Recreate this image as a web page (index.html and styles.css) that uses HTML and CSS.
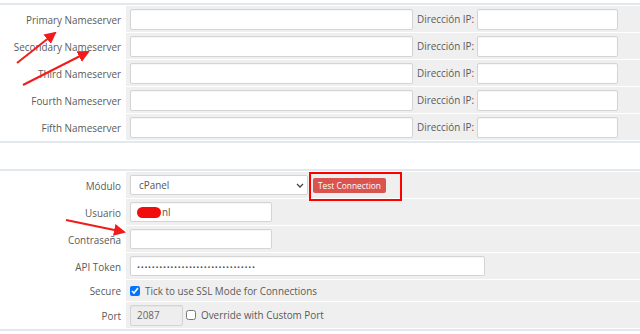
FILE: index.html
```html
<!DOCTYPE html>
<html lang="es">
<head>
    <meta charset="UTF-8">
    <meta name="viewport" content="width=device-width, initial-scale=1.0">
    <title>Servidor</title>
    <link rel="stylesheet" href="styles.css">
</head>
<body>
    <div class="panel panel-ns">
        <div class="row">
            <div class="label">Primary Nameserver</div>
            <div class="field">
                <input class="input ns" type="text">
                <span class="ip-label">Dirección IP:</span>
                <input class="input ip" type="text">
            </div>
        </div>
        <div class="row">
            <div class="label">Secondary Nameserver</div>
            <div class="field">
                <input class="input ns" type="text">
                <span class="ip-label">Dirección IP:</span>
                <input class="input ip" type="text">
            </div>
        </div>
        <div class="row">
            <div class="label">Third Nameserver</div>
            <div class="field">
                <input class="input ns" type="text">
                <span class="ip-label">Dirección IP:</span>
                <input class="input ip" type="text">
            </div>
        </div>
        <div class="row">
            <div class="label">Fourth Nameserver</div>
            <div class="field">
                <input class="input ns" type="text">
                <span class="ip-label">Dirección IP:</span>
                <input class="input ip" type="text">
            </div>
        </div>
        <div class="row">
            <div class="label">Fifth Nameserver</div>
            <div class="field">
                <input class="input ns" type="text">
                <span class="ip-label">Dirección IP:</span>
                <input class="input ip" type="text">
            </div>
        </div>
    </div>

    <div class="panel panel-module">
        <div class="row">
            <div class="label">Módulo</div>
            <div class="field">
                <div class="select">
                    <span>cPanel</span>
                    <svg class="chevron" width="8" height="5" viewBox="0 0 8 5"><path d="M1 1l3 3 3-3" fill="none" stroke="#444" stroke-width="1.3"/></svg>
                </div>
                <button class="btn-test">Test Connection</button>
            </div>
        </div>
        <div class="row">
            <div class="label">Usuario</div>
            <div class="field">
                <div class="input short"><span class="redact"></span>nl</div>
            </div>
        </div>
        <div class="row">
            <div class="label">Contraseña</div>
            <div class="field">
                <input class="input short" type="text">
            </div>
        </div>
        <div class="row">
            <div class="label">API Token</div>
            <div class="field">
                <div class="input token"><span class="dots">••••••••••••••••••••••••••••••••</span></div>
            </div>
        </div>
        <div class="row row-short">
            <div class="label">Secure</div>
            <div class="field">
                <label class="check"><input type="checkbox" checked> Tick to use SSL Mode for Connections</label>
            </div>
        </div>
        <div class="row">
            <div class="label">Port</div>
            <div class="field">
                <div class="input port">2087</div>
                <label class="check check-port"><input type="checkbox"> Override with Custom Port</label>
            </div>
        </div>
    </div>

    <!-- red annotations drawn over the screenshot -->
    <svg class="marks" width="640" height="334" viewBox="0 0 640 334">
        <defs>
            <marker id="head" markerWidth="6" markerHeight="6" refX="5" refY="3" orient="auto" markerUnits="strokeWidth">
                <path d="M0 0L6 3L0 6z" fill="#f21b1b"/>
            </marker>
        </defs>
        <line x1="17" y1="63" x2="55" y2="33" stroke="#f21b1b" stroke-width="2" marker-end="url(#head)"/>
        <line x1="23" y1="85" x2="88" y2="52" stroke="#f21b1b" stroke-width="2" marker-end="url(#head)"/>
        <line x1="66" y1="220" x2="124" y2="232" stroke="#f21b1b" stroke-width="2" marker-end="url(#head)"/>
        <rect x="310" y="173" width="91" height="27" fill="none" stroke="#ff0000" stroke-width="2"/>
    </svg>
</body>
</html>
```

FILE: styles.css
```css
body {
    margin: 0;
    font-family: "Open Sans", "DejaVu Sans", sans-serif;
    font-size: 9.9px;
    color: #5a5a5a;
    background: #fff;
    position: relative;
}
.panel {
    border-top: 2px solid #e3e8ed;
    border-bottom: 2px solid #e3e8ed;
    padding-bottom: 1px;
}
.panel-ns {
    margin-top: 3px;
}
.panel-module {
    margin-top: 26px;
}
.row {
    display: flex;
    height: 26px;
    padding-top: 1px;
}
.row-short {
    height: 21px;
}
.label {
    width: 121px;
    padding: 1px 5px 0 0;
    display: flex;
    align-items: center;
    justify-content: flex-end;
    white-space: nowrap;
}
.field {
    flex: 1;
    background: #efefef;
    display: flex;
    align-items: center;
    padding-left: 4px;
}
.input {
    box-sizing: border-box;
    height: 21px;
    border: 1px solid #d4d4d4;
    border-radius: 2px;
    background: #fff;
    font-family: inherit;
    font-size: inherit;
    color: #555;
    padding: 0 6px;
    margin: 0;
    display: flex;
    align-items: center;
    box-shadow: inset 0 1px 1px rgba(0, 0, 0, 0.04);
}
.ns {
    width: 283px;
}
.ip {
    width: 141px;
}
.ip-label {
    width: 60px;
    padding-left: 4px;
}
.select {
    box-sizing: border-box;
    width: 178px;
    height: 20px;
    border: 1px solid #d4d4d4;
    border-radius: 2px;
    background: #fff;
    display: flex;
    align-items: center;
    justify-content: space-between;
    padding: 0 3px 0 8px;
    color: #555;
}
.chevron {
    display: block;
}
.btn-test {
    margin-left: 5px;
    height: 15px;
    width: 73px;
    padding: 0;
    border: none;
    border-radius: 2px;
    background: #d9534f;
    color: #fff;
    font-family: inherit;
    font-size: 8.4px;
}
.short {
    width: 142px;
    height: 20px;
}
.redact {
    display: inline-block;
    width: 24px;
    height: 11px;
    border-radius: 6px;
    background: #f20d0d;
    margin-right: 1px;
}
.token {
    width: 355px;
    height: 20px;
}
.dots {
    font-size: 8px;
    letter-spacing: 0.7px;
    color: #555;
}
.check {
    display: flex;
    align-items: center;
}
.check input {
    width: 10px;
    height: 10px;
    margin: 0 5px 0 0;
}
.port {
    width: 53px;
    background: #eee;
    color: #666;
}
.check-port {
    margin-left: 3px;
}
.marks {
    position: absolute;
    left: 0;
    top: 0;
    pointer-events: none;
}
```
